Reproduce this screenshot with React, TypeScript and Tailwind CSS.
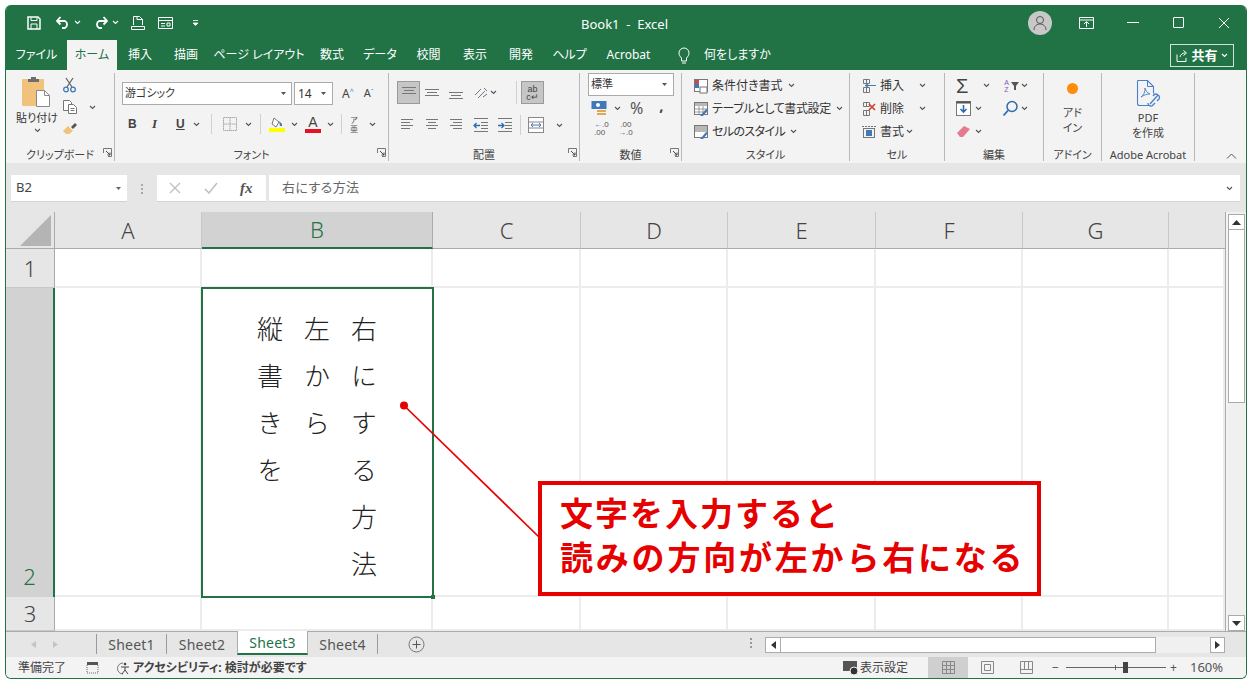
import type { ReactNode } from "react";

// widths are measured from the reference
const TABS = [
  { label: "ファイル", w: "w-[61px]" },
  { label: "ホーム", w: "w-[50px]", active: true },
  { label: "挿入", w: "w-[46px]" },
  { label: "描画", w: "w-[46px]" },
  { label: "ページ レイアウト", w: "w-[100px]" },
  { label: "数式", w: "w-[46px]" },
  { label: "データ", w: "w-[50px]" },
  { label: "校閲", w: "w-[47px]" },
  { label: "表示", w: "w-[46px]" },
  { label: "開発", w: "w-[46px]" },
  { label: "ヘルプ", w: "w-[51px]" },
  { label: "Acrobat", w: "w-[67px]" },
];

function Svg({ size = 16, w, h, children, className = "" }: { size?: number; w?: number; h?: number; children: ReactNode; className?: string }) {
  const vw = w ?? size;
  const vh = h ?? size;
  return (
    <svg width={vw} height={vh} viewBox={`0 0 ${vw} ${vh}`} fill="none" className={`shrink-0 ${className}`}>
      {children}
    </svg>
  );
}

function Chev({ className = "", color = "#555" }: { className?: string; color?: string }) {
  return (
    <Svg w={7} h={5} className={className}>
      <path d="M1 1l2.500 2.500L6 1" stroke={color} strokeWidth="1.100" />
    </Svg>
  );
}

function Launcher() {
  return (
    <Svg size={9} className="absolute right-[2px] bottom-[4px]">
      <path d="M.5 5V.5H8.500V8.500H5" stroke="#777" />
      <path d="M3 3l4 4M7 4.500V7H4.500" stroke="#444" />
    </Svg>
  );
}

function Group({ w, label, children, launcher }: { w: string; label: string; children: ReactNode; launcher?: boolean }) {
  return (
    <div className={`relative ${w} flex flex-col my-[3px] border-r border-[#b9b9b9] shrink-0`}>
      <div className="h-[73px] flex flex-col">{children}</div>
      <div className="h-[14px] mt-[1px] flex items-center justify-center text-[11px] leading-none text-[#444] whitespace-nowrap">{label}</div>
      {launcher && <Launcher />}
    </div>
  );
}

function Lines({ type }: { type: "left" | "center" | "right" | "top" | "mid" | "bottom" }) {
  const rows: Record<string, [number, number][]> = {
    left: [[2, 12], [5, 9], [8, 12], [11, 9]],
    center: [[2, 12], [5, 8], [8, 12], [11, 8]],
    right: [[2, 12], [5, 9], [8, 12], [11, 9]],
    top: [[2, 14], [5, 10], [8, 14]],
    mid: [[4, 14], [7, 10], [10, 14]],
    bottom: [[7, 14], [10, 10], [13, 14]],
  };
  return (
    <Svg size={16}>
      {rows[type].map(([y, len]) => {
        const x = type === "left" ? 2 : type === "right" ? 14 - len : 8 - len / 2;
        return <path key={y} d={`M${x} ${y + 0.5}h${len}`} stroke="#777" />;
      })}
    </Svg>
  );
}

function Clipboard() {
  return (
    <Svg w={30} h={32}>
      <rect x="0" y="3" width="22" height="27" rx="1" fill="#f0c27b" />
      <path d="M6 3h3V1h5v2h3v3H6z" fill="#6d6d6d" />
      <path d="M14.500 14.500h8l5 5v11h-13z" fill="#fff" stroke="#8a8a8a" />
      <path d="M22.500 14.500v5h5" stroke="#8a8a8a" />
    </Svg>
  );
}

function Scissors() {
  return (
    <Svg size={16}>
      <path d="M4 1l6 9M11 1L5 10" stroke="#666" strokeWidth="1.300" />
      <circle cx="4" cy="12.500" r="2.300" stroke="#3f79b8" strokeWidth="1.300" />
      <circle cx="11" cy="12.500" r="2.300" stroke="#3f79b8" strokeWidth="1.300" />
    </Svg>
  );
}

function CopyIcon() {
  return (
    <Svg size={16}>
      <path d="M1.500 1.500h6l2 2v8h-8z" fill="#fff" stroke="#777" />
      <path d="M6.500 5.500h5l3 3v6h-8z" fill="#fff" stroke="#777" />
      <path d="M8.500 9.500h4M8.500 11.500h4" stroke="#777" />
    </Svg>
  );
}

function Brush() {
  return (
    <Svg size={16}>
      <path d="M1 10l5-5 5 5-4 3H4z" fill="#f0c27b" />
      <path d="M9 6l4-4 2 2-4 4z" fill="#555" />
    </Svg>
  );
}

function SheetIcon({ accent }: { accent: "rule" | "table" | "style" }) {
  return (
    <Svg size={16}>
      <rect x="1.500" y="1.500" width="13" height="12" fill="#fff" stroke="#777" />
      {accent === "rule" && (
        <>
          <rect x="2" y="2" width="4" height="4" fill="#c0504d" />
          <rect x="2" y="6" width="4" height="4" fill="#3f79b8" />
          <rect x="7" y="9" width="7" height="6" fill="#fff" stroke="#777" />
        </>
      )}
      {accent !== "rule" && <rect x="2" y="2" width="12" height={accent === "table" ? 3 : 6} fill="#b7b7b7" />}
      {accent === "table" && <path d="M2 8h12M2 11h12M6 5v8M10 5v8" stroke="#9a9a9a" />}
      <path d="M8 14l5-6 2 1-5 6H7z" fill={accent === "rule" ? "none" : "#3f79b8"} />
    </Svg>
  );
}

function CellIcon({ kind }: { kind: "insert" | "delete" | "format" }) {
  return (
    <Svg size={16}>
      {kind === "format" ? (
        <>
          <path d="M1 2.500h14" stroke="#777" strokeDasharray="2 1" />
          <rect x="2.500" y="4.500" width="11" height="9" stroke="#777" />
          <rect x="5" y="6" width="6" height="6" fill="#3f79b8" />
        </>
      ) : (
        <>
          <path d="M2.500 1.500h6v4h-6zM2.500 9.500h6v5h-6zM5.500 9.500v5M5.500 1.500v4" stroke="#777" />
          {kind === "insert" ? (
            <path d="M4 7.500h11M7 5.500l-2 2 2 2" stroke="#3f79b8" strokeWidth="1.200" />
          ) : (
            <path d="M8 3l6 6M14 3l-6 6" stroke="#d83b2a" strokeWidth="1.600" />
          )}
        </>
      )}
    </Svg>
  );
}

function Pdf() {
  return (
    <Svg w={26} h={30}>
      <path d="M2.500 1.500h10l6 6v7M15 26.500H4.500a2 2 0 0 1-2-2v-23" stroke="#4a7fc9" strokeWidth="1.100" />
      <path d="M12.500 1.500v6h6" stroke="#4a7fc9" />
      <path d="M6 18c3-2 4-5 4-9 1 3 2 5 5 6-3 0-6 1-9 3z" stroke="#4a7fc9" strokeWidth=".9" />
      <path d="M15 25l8-9M13 24a3 3 0 0 0 4 3l3-3M18 17a3 3 0 0 1 6 3l-2 2" stroke="#4a7fc9" strokeWidth="1.300" />
    </Svg>
  );
}

function SideScroll() {
  return (
    <div className="w-[17px] ml-[2px] pt-[2px] flex flex-col bg-[#f0f0f0] shrink-0">
      <div className="h-[16px] bg-white border border-[#ababab] flex items-center justify-center">
        <Svg w={9} h={5}>
          <path d="M0 5l4.500-5L9 5z" fill="#333" />
        </Svg>
      </div>
      <div className="h-[173px] bg-white border-x border-b border-[#ababab]" />
      <div className="flex-1" />
      <div className="h-[16px] bg-white border border-[#ababab] flex items-center justify-center">
        <Svg w={9} h={5}>
          <path d="M0 0l4.500 5L9 0z" fill="#333" />
        </Svg>
      </div>
    </div>
  );
}

function Ribbon() {
  return (
    <div className="h-[93px] bg-[#f3f3f3] flex items-start">
      <Group w="w-[109px]" label="クリップボード" launcher>
        <div className="flex">
          <div className="w-[56px] flex flex-col items-center pl-[6px] pt-[3px]">
            <Clipboard />
            <div className="text-[11px] leading-[14px] mt-[3px] text-[#333] whitespace-nowrap">貼り付け</div>
            <Chev className="mt-[3px]" />
          </div>
          <div className="flex flex-col gap-[6px] pt-[4px]">
            <Scissors />
            <div className="flex items-center gap-[11px]">
              <CopyIcon />
              <Chev />
            </div>
            <Brush />
          </div>
        </div>
      </Group>

      <Group w="w-[274px]" label="フォント" launcher>
        <div className="flex items-center pl-[7px] pt-[9px]">
          <div className="w-[170px] h-[23px] bg-white border border-[#ababab] flex items-center justify-between px-[2px] text-[11px] text-[#333]">
            <span>游ゴシック</span>
            <Svg w={5} h={3} className="mr-[3px]">
              <path d="M0 0h5L2.500 3z" fill="#555" />
            </Svg>
          </div>
          <div className="w-[39px] h-[23px] ml-[2px] bg-white border border-[#ababab] flex items-center justify-between px-[3px] text-[12px] text-[#333]">
            <span>14</span>
            <Svg w={5} h={3} className="mr-[3px]">
              <path d="M0 0h5L2.500 3z" fill="#555" />
            </Svg>
          </div>
          <span className="ml-[9px] text-[12px] text-[#444]">A<sup className="text-[7px] text-[#3f79b8]">^</sup></span>
          <span className="ml-[10px] text-[11px] text-[#444]">A<sup className="text-[7px] text-[#3f79b8]">ˇ</sup></span>
        </div>
        <div className="flex items-center pl-[13px] mt-[8px] h-[22px] text-[#444]">
          <span className="w-[24px] text-[12px] font-bold [font-family:'Liberation_Sans']">B</span>
          <span className="w-[24px] text-[13px] italic font-bold [font-family:'Liberation_Serif']">I</span>
          <span className="w-[15px] text-[12px] font-bold underline [font-family:'Liberation_Sans']">U</span>
          <Chev className="ml-[2px]" />
          <div className="w-px h-[20px] bg-[#d0d0d0] mx-[11px]" />
          <Svg size={14}>
            <path d="M.5.5h13v13H.5zM7 .5v13M.5 7h13" stroke="#a8a8a8" strokeDasharray="1.500 .5" />
          </Svg>
          <Chev className="ml-[8px]" />
          <div className="w-px h-[20px] bg-[#d0d0d0] mx-[8px]" />
          <Svg size={16}>
            <path d="M5 2l5 4-3 5-4-3z" stroke="#777" fill="#fff" />
            <path d="M10 5l3 3v2h-2z" fill="#3f79b8" />
            <rect y="12" width="16" height="4" fill="#ffff00" />
          </Svg>
          <Chev className="ml-[6px]" />
          <div className="w-[16px] ml-[7px] flex flex-col items-center">
            <span className="text-[14px] leading-[13px] text-[#444] [font-family:'Liberation_Sans']">A</span>
            <div className="w-[16px] h-[4px] bg-[#e81123]" />
          </div>
          <Chev className="ml-[6px]" />
          <div className="w-px h-[20px] bg-[#d0d0d0] mx-[7px]" />
          <div className="w-[10px] flex flex-col items-center text-[8px] leading-[9px] text-[#555]">
            <span>ア</span>
            <span>亜</span>
          </div>
          <Chev className="ml-[10px]" />
        </div>
      </Group>

      <Group w="w-[191px]" label="配置" launcher>
        <div className="flex items-center pl-[8px] pt-[8px]">
          <div className="w-[23px] h-[23px] bg-[#c6c6c6] border border-[#9a9a9a] flex items-center justify-center">
            <Lines type="top" />
          </div>
          <div className="ml-[4px]"><Lines type="mid" /></div>
          <div className="ml-[8px]"><Lines type="bottom" /></div>
          <Svg size={16} className="ml-[9px]">
            <path d="M2 10l6-6M5 13l7-7M11 3l3 3" stroke="#777" />
            <path d="M10 12l4-3" stroke="#3f79b8" />
          </Svg>
          <Chev className="ml-[1px]" />
          <div className="w-px h-[23px] bg-[#d0d0d0] ml-[19px]" />
          <div className="w-[23px] h-[23px] ml-[4px] bg-[#c6c6c6] border border-[#9a9a9a] flex flex-col items-center justify-center text-[9px] leading-[8px] text-[#444] [font-family:'Liberation_Sans']">
            <span>ab</span>
            <span>c↵</span>
          </div>
        </div>
        <div className="flex items-center pl-[10px] mt-[10px] h-[22px]">
          <Lines type="left" />
          <div className="ml-[9px]"><Lines type="center" /></div>
          <div className="ml-[8px]"><Lines type="right" /></div>
          <Svg size={16} className="ml-[9px]">
            <path d="M1 1.500h14M8 5.500h7M8 8.500h7M8 11.500h7M1 14.500h14" stroke="#777" />
            <path d="M7 8.500H1M3.500 6l-2.500 2.500L3.500 11" stroke="#2b6cb0" strokeWidth="1.300" />
          </Svg>
          <Svg size={16} className="ml-[8px]">
            <path d="M1 1.500h14M8 5.500h7M8 8.500h7M8 11.500h7M1 14.500h14" stroke="#777" />
            <path d="M1 8.500h6M4.500 6L7 8.500 4.500 11" stroke="#2b6cb0" strokeWidth="1.300" />
          </Svg>
          <div className="w-px h-[20px] bg-[#d0d0d0] ml-[7px]" />
          <Svg size={16} className="ml-[7px]">
            <rect x=".5" y=".5" width="15" height="15" fill="#fff" stroke="#888" />
            <path d="M.5 5h15M.5 11h15" stroke="#888" />
            <path d="M3 8h10M5 6L3 8l2 2M11 6l2 2-2 2" stroke="#3f79b8" />
          </Svg>
          <Chev className="ml-[12px]" />
        </div>
      </Group>

      <Group w="w-[102px]" label="数値" launcher>
        <div className="ml-[8px] w-[86px] h-[23px] bg-white border border-[#ababab] flex items-center justify-between px-[2px] text-[11px] text-[#333]">
          <span>標準</span>
          <Svg w={5} h={3} className="mr-[4px]">
            <path d="M0 0h5L2.500 3z" fill="#555" />
          </Svg>
        </div>
        <div className="flex items-center pl-[11px] mt-[1px] h-[22px]">
          <Svg size={17}>
            <rect x=".5" y="1" width="15" height="8" fill="#3f79b8" />
            <circle cx="7" cy="5" r="2" fill="#fff" />
            <rect x="6" y="10" width="9" height="2" fill="#e0a850" />
            <rect x="6" y="13" width="9" height="2" fill="#e0a850" />
          </Svg>
          <Chev className="ml-[6px]" />
          <span className="ml-[9px] text-[16px] leading-none text-[#555]">%</span>
          <span className="ml-[16px] text-[15px] leading-none font-bold text-[#444] -mt-[6px]">,</span>
        </div>
        <div className="flex items-center pl-[14px] mt-[2px] text-[8px] leading-[8px] text-[#555]">
          <span className="w-[24px] [font-family:'Liberation_Sans']"><span className="text-[#2b6cb0]">←</span>.0<br />.00</span>
          <span className="[font-family:'Liberation_Sans']">&nbsp;.00<br /><span className="text-[#2b6cb0]">→</span>.0</span>
        </div>
      </Group>

      <Group w="w-[168px]" label="スタイル">
        <div className="flex flex-col pl-[11px] pt-[1px] text-[12px] text-[#333] whitespace-nowrap">
          <div className="h-[23px] flex items-center gap-[3px]"><SheetIcon accent="rule" />条件付き書式<Chev className="ml-[2px]" /></div>
          <div className="h-[23px] flex items-center gap-[3px] tracking-[-0.4px]"><SheetIcon accent="table" />テーブルとして書式設定<Chev className="ml-[2px]" /></div>
          <div className="h-[23px] flex items-center gap-[3px] tracking-[-0.6px]"><SheetIcon accent="style" />セルのスタイル<Chev className="ml-[2px]" /></div>
        </div>
      </Group>

      <Group w="w-[95px]" label="セル">
        <div className="flex flex-col pl-[11px] pt-[1px] text-[12px] text-[#333] whitespace-nowrap">
          <div className="h-[23px] flex items-center"><CellIcon kind="insert" /><span className="ml-[3px] w-[36px]">挿入</span><Chev className="ml-[3px]" /></div>
          <div className="h-[23px] flex items-center"><CellIcon kind="delete" /><span className="ml-[3px] w-[36px]">削除</span><Chev className="ml-[3px]" /></div>
          <div className="h-[23px] flex items-center"><CellIcon kind="format" /><span className="ml-[3px] w-[26px]">書式</span><Chev /></div>
        </div>
      </Group>

      <Group w="w-[99px]" label="編集">
        <div className="flex flex-col pl-[11px] pt-[1px]">
          <div className="h-[23px] flex items-center">
            <span className="w-[20px] text-[20px] leading-none text-[#444] [font-family:'Liberation_Sans']">Σ</span>
            <Chev className="ml-[7px]" />
            <div className="ml-[13px] w-[7px] flex flex-col items-center text-[7px] leading-[7px] text-[#7c5bb8] [font-family:'Liberation_Sans']">
              <span>A</span>
              <span>Z</span>
            </div>
            <Svg w={9} h={8} className="ml-[1px]">
              <path d="M0 0h8L5 4v4H3V4z" fill="#555" />
            </Svg>
            <Chev className="ml-[1px]" />
          </div>
          <div className="h-[23px] flex items-center">
            <Svg size={15}>
              <rect x=".5" y=".5" width="14" height="14" fill="#fff" stroke="#777" />
              <path d="M.5 1.500h14" stroke="#555" strokeWidth="2" />
              <path d="M7.500 4v7M4.500 8l3 3 3-3" stroke="#2b6cb0" strokeWidth="1.600" />
            </Svg>
            <Chev className="ml-[4px]" />
            <Svg size={17} className="ml-[20px]">
              <circle cx="10" cy="6.500" r="5" stroke="#2b6cb0" strokeWidth="1.500" />
              <path d="M6 10.500l-4.500 5" stroke="#2b6cb0" strokeWidth="1.800" />
            </Svg>
            <Chev className="ml-[2px]" />
          </div>
          <div className="h-[23px] flex items-center">
            <Svg size={15}>
              <path d="M1 9l7-7 6 3-7 8H4z" fill="#e57a8e" />
            </Svg>
            <Chev className="ml-[4px]" />
          </div>
        </div>
      </Group>

      <Group w="w-[58px]" label="アドイン">
        <div className="flex flex-col items-center pt-[10px]">
          <div className="w-[11px] h-[11px] rounded-full bg-[#ff8c0a]" />
          <div className="mt-[11px] text-[11px] leading-[15px] text-center text-[#444]">アド<br />イン</div>
        </div>
      </Group>

      <Group w="w-[93px]" label="Adobe Acrobat">
        <div className="flex flex-col items-center pt-[6px]">
          <Pdf />
          <div className="mt-[1px] text-[11px] leading-[15px] text-center text-[#444]">PDF<br />を作成</div>
        </div>
      </Group>

      <div className="flex-1 h-full flex items-end justify-end pr-[9px] pb-[4px]">
        <Svg w={11} h={6}>
          <path d="M1 5.500l4.500-4.500L10 5.500" stroke="#555" />
        </Svg>
      </div>
    </div>
  );
}

function FormulaBar() {
  return (
    <div className="h-[49px] bg-[#e6e6e6] pt-[12px] pl-[5px] pr-[6px] flex items-start">
      <div className="w-[116px] h-[27px] bg-white flex items-center justify-between pl-[5px] pr-[6px] text-[13px] text-[#444] border-b border-[#d4d4d4]">
        <span>B2</span>
        <Svg w={5} h={3}>
          <path d="M0 0h5L2.500 3z" fill="#666" />
        </Svg>
      </div>
      <div className="w-[30px] h-[27px] flex flex-col items-center justify-center gap-[2px]">
        <span className="w-[2px] h-[2px] bg-[#aaa]" />
        <span className="w-[2px] h-[2px] bg-[#aaa]" />
        <span className="w-[2px] h-[2px] bg-[#aaa]" />
      </div>
      <div className="w-[109px] h-[27px] bg-white flex items-center pl-[12px] border-b border-[#d4d4d4]">
        <Svg size={12}>
          <path d="M1 1l10 10M11 1L1 11" stroke="#bdbdbd" strokeWidth="1.200" />
        </Svg>
        <Svg size={14} className="ml-[23px]">
          <path d="M1 8l4 4 8-10" stroke="#bdbdbd" strokeWidth="1.500" />
        </Svg>
        <span className="ml-[22px] text-[15px] italic font-bold text-[#555] [font-family:'Liberation_Serif']">fx</span>
      </div>
      <div className="flex-1 ml-[3px] h-[27px] bg-white flex items-center justify-between pl-[13px] pr-[7px] text-[13px] text-[#666] border-b border-[#d4d4d4] tracking-[0.4px]">
        <span>右にする方法</span>
        <Chev />
      </div>
    </div>
  );
}

function ColHead({ label, active }: { label: string; active?: boolean }) {
  return (
    <div
      className={`flex items-center justify-center text-[22px] font-light border-r ${
        active
          ? "bg-[#d2d2d2] text-[#217346] border-b-2 border-b-[#217346] border-r-[#ababab]"
          : "bg-[#e6e6e6] text-[#444] border-b border-b-[#ababab] border-r-[#c8c8c8]"
      }`}
    >
      {label}
    </div>
  );
}

function RowHead({ label }: { label: string }) {
  return (
    <div className="flex justify-center items-center text-[22px] font-light bg-[#e6e6e6] text-[#444] border-r border-r-[#ababab] border-b border-b-[#c8c8c8]">
      {label}
    </div>
  );
}

function Cell() {
  return <div className="border-r-2 border-b-2 border-[#ececec] bg-white" />;
}

function Sheet() {
  const cols = 8;
  return (
    <div className="flex-1 flex min-h-0">
      <div className="w-[1219px] grid grid-cols-[49px_147px_231px_148px_147px_148px_147px_146px_56px] grid-rows-[37px_39px_309px_34px] overflow-hidden">
        <div className="bg-[#e6e6e6] border-r border-b border-[#ababab] flex items-end justify-end pr-[3px] pb-[2px]">
          <Svg w={31} h={31}>
            <path d="M31 0v31H0z" fill="#b4b4b4" />
          </Svg>
        </div>
        {["A", "B", "C", "D", "E", "F", "G"].map((c) => (
          <ColHead key={c} label={c} active={c === "B"} />
        ))}
        <div className="bg-[#e6e6e6] border-b border-b-[#ababab]" />

        <RowHead label="1" />
        {Array.from({ length: cols }).map((_, i) => (
          <Cell key={i} />
        ))}

        <div className="bg-[#d2d2d2] text-[#217346] border-r-2 border-[#217346] flex items-end justify-center text-[22px] font-light pb-[4px]">2</div>
        <Cell />
        <div className="relative border-2 border-[#217346] bg-white flex items-start justify-center pt-[27px] -m-px z-10">
          <div className="[writing-mode:vertical-rl] [font-feature-settings:normal] text-[26px] font-light leading-[47px] tracking-[21px] text-[#222] whitespace-pre h-[282px] mr-[5px]">
            {"右にする方法\n左から\n縦書きを"}
          </div>
          <span className="absolute -right-[3px] -bottom-[3px] w-[4px] h-[4px] bg-[#217346]" />
        </div>
        {Array.from({ length: cols - 2 }).map((_, i) => (
          <Cell key={i} />
        ))}

        <RowHead label="3" />
        {Array.from({ length: cols }).map((_, i) => (
          <Cell key={i} />
        ))}
      </div>
      <div className="w-px bg-[#ababab] shrink-0" />
      <SideScroll />
    </div>
  );
}

function SheetTabs() {
  return (
    <div className="h-[26px] bg-[#e6e6e6] border-t border-[#ababab] flex items-start text-[14px] text-[#555] tracking-[0.2px]">
      <div className="w-[90px] h-[24px] flex items-center pl-[25px] gap-[17px]">
        <Svg w={5} h={7}>
          <path d="M5 0v7L0 3.500z" fill="#c4c4c4" />
        </Svg>
        <Svg w={5} h={7}>
          <path d="M0 0v7l5-3.500z" fill="#c4c4c4" />
        </Svg>
      </div>
      <div className="w-[71px] h-[20px] mt-[2px] border-x border-[#9a9a9a] flex items-center justify-center">Sheet1</div>
      <div className="w-[70px] h-[20px] mt-[2px] flex items-center justify-center">Sheet2</div>
      <div className="w-[71px] h-[24px] -mt-px bg-white border-x border-[#ababab] border-b-2 border-b-[#217346] text-[#217346] flex items-center justify-center">Sheet3</div>
      <div className="w-[70px] h-[20px] mt-[2px] border-r border-[#9a9a9a] flex items-center justify-center">Sheet4</div>
      <div className="ml-[30px] mt-[4px]">
        <Svg size={17}>
          <circle cx="8.500" cy="8.500" r="7.500" stroke="#777" />
          <path d="M8.500 4.500v8M4.500 8.500h8" stroke="#555" />
        </Svg>
      </div>
      <div className="ml-[325px] mt-[6px] flex flex-col gap-[2px]">
        <span className="w-[2px] h-[2px] bg-[#999]" />
        <span className="w-[2px] h-[2px] bg-[#999]" />
        <span className="w-[2px] h-[2px] bg-[#999]" />
      </div>
      <div className="ml-[13px] mt-[5px] w-[460px] h-[16px] flex">
        <div className="w-[16px] bg-white border border-[#ababab] flex items-center justify-center">
          <Svg w={5} h={8}>
            <path d="M5 0v8L0 4z" fill="#333" />
          </Svg>
        </div>
        <div className="w-[375px] bg-white border-y border-r border-[#ababab]" />
        <div className="flex-1 bg-[#f0f0f0]" />
        <div className="w-[15px] bg-white border border-[#ababab] flex items-center justify-center">
          <Svg w={5} h={8}>
            <path d="M0 0v8l5-4z" fill="#333" />
          </Svg>
        </div>
      </div>
    </div>
  );
}

function StatusBar() {
  return (
    <div className="h-[21px] bg-[#f3f3f3] flex items-center text-[12px] text-[#444]">
      <span className="ml-[12px] w-[68px]">準備完了</span>
      <Svg size={13}>
        <rect x="1" y="3" width="11" height="9" fill="none" stroke="#666" strokeDasharray="1 1" />
        <rect x="1" y="1" width="11" height="3" fill="#555" />
      </Svg>
      <Svg size={16} className="ml-[17px]">
        <path d="M7 3a5.500 5.500 0 0 0 0 11" stroke="#777" />
        <circle cx="9" cy="4" r="1.300" fill="#444" />
        <path d="M5 7h8M9 7v3l-3 4M9 10l3 4" stroke="#444" />
      </Svg>
      <span className="ml-[1px] font-bold text-[12px]">アクセシビリティ: 検討が必要です</span>
      <div className="ml-auto flex items-center h-full mr-[22px]">
        <Svg size={16}>
          <rect y="1" width="14" height="10" fill="#555" />
          <circle cx="11" cy="11" r="4" fill="#333" stroke="#f3f3f3" />
        </Svg>
        <span className="w-[48px] text-[12px] mr-[20px] ml-[1px] whitespace-nowrap">表示設定</span>
        <div className="w-[40px] h-full bg-[#cfcfcf] flex items-center justify-center">
          <Svg size={13}>
            <path d="M.5.5h12v12H.5zM4.500.5v12M8.500.5v12M.5 4.500h12M.5 8.500h12" stroke="#888" />
          </Svg>
        </div>
        <div className="w-[39px] flex items-center justify-center">
          <Svg size={13}>
            <path d="M.5.5h12v12H.5zM3.500 3.500h6v6h-6z" stroke="#888" />
          </Svg>
        </div>
        <div className="w-[39px] flex items-center justify-center">
          <Svg size={13}>
            <path d="M.5.5h12v12H.5zM.5 8.500h12M4.500.5v8M8.500.5v8" stroke="#888" />
          </Svg>
        </div>
        <span className="w-[12px] ml-[6px] text-[#555]">−</span>
        <div className="relative w-[100px] h-px ml-[2px] bg-[#666]">
          <span className="absolute left-[49px] -top-[2px] w-px h-[5px] bg-[#666]" />
          <span className="absolute left-[57px] -top-[5px] w-[5px] h-[11px] bg-[#444]" />
        </div>
        <span className="ml-[4px] w-[20px] text-[#555]">+</span>
        <span className="w-[34px] text-[13px] text-[#555] [font-family:'Noto_Sans']">160%</span>
      </div>
    </div>
  );
}

export default function App() {
  return (
    <div className="relative w-[1255px] h-[686px] bg-white overflow-hidden [font-feature-settings:'palt'] font-['Noto_Sans','Noto_Sans_CJK_JP',sans-serif]">
      <div className="absolute isolate left-[5px] top-[5px] w-[1242px] h-[674px] rounded-[6px] overflow-hidden border-x border-b border-[#217346] flex flex-col bg-[#f3f3f3]">
        {/* Title bar */}
        <div className="h-[35px] bg-[#217346] relative flex items-center text-white shrink-0">
          <div className="flex items-center pl-[21px]">
            <Svg size={14}>
              <path d="M1 1h10l2 2v10H1z" stroke="#fff" strokeWidth="1.500" />
              <path d="M4 1.500v3h6v-3M4 13V8h6v5" stroke="#fff" />
            </Svg>
            <Svg w={14} h={13} className="ml-[15px]">
              <path d="M1 5h8a4 4 0 0 1 0 7H6M4.500 1L1 5l3.500 3.500" stroke="#fff" strokeWidth="1.800" />
            </Svg>
            <Chev color="#fff" className="ml-[4px]" />
            <Svg w={14} h={13} className="ml-[13px]">
              <path d="M13 5H5a4 4 0 0 0 0 7h3M9.500 1L13 5 9.500 8.500" stroke="#fff" strokeWidth="1.800" />
            </Svg>
            <Chev color="#fff" className="ml-[4px]" />
            <Svg size={14} className="ml-[12px]">
              <path d="M2.500 9V.5h6l3 3V9M6 .5v3h5.500M.5 10.500h13v3H.5z" stroke="#fff" />
            </Svg>
            <Svg w={15} h={12} className="ml-[13px]">
              <path d="M.5.5h14v11H.5zM.5 3.500h14M3 6.500h4M9 6h3v3H9zM3 9h4" stroke="#fff" />
            </Svg>
            <Svg w={5} h={6} className="ml-[20px]">
              <path d="M0 .5h5M0 3h5L2.500 5.500z" stroke="#fff" strokeWidth=".8" fill="#fff" />
            </Svg>
          </div>
          <div className="absolute left-[575px] top-[10px] text-[13px] leading-[18px]">Book1&nbsp; -&nbsp; Excel</div>
          <div className="ml-auto flex items-center">
            <div className="w-[24px] h-[24px] rounded-full bg-[#c8c8c8] flex items-center justify-center">
              <Svg size={16}>
                <circle cx="8" cy="5" r="3.500" stroke="#555" />
                <path d="M2 15c0-4 3-6 6-6s6 2 6 6" stroke="#555" />
              </Svg>
            </div>
            <Svg w={15} h={12} className="ml-[27px]">
              <path d="M.5.500h14v11H.5zM.5 3h14M7.500 10V5M5 7l2.500-2.500L10 7" stroke="#fff" />
            </Svg>
            <span className="w-[12px] h-px bg-white ml-[33px]" />
            <span className="w-[11px] h-[11px] border border-white ml-[34px] rounded-[1px]" />
            <Svg size={12} className="ml-[34px] mr-[16px]">
              <path d="M1 1l10 10M11 1L1 11" stroke="#fff" />
            </Svg>
          </div>
        </div>

        {/* Tabs */}
        <div className="h-[30px] bg-[#217346] flex items-end text-[12px] text-white shrink-0 relative">
          {TABS.map((t) => (
            <div
              key={t.label}
              className={`${t.w} h-[30px] flex items-center justify-center whitespace-nowrap ${
                t.active ? "bg-[#f3f3f3] text-[#217346]" : ""
              }`}
            >
              {t.label}
            </div>
          ))}
          <div className="h-[30px] flex items-center ml-[16px]">
            <Svg w={12} h={17}>
              <path d="M3.500 11C2 9.500 1 8 1 6a5 5 0 0 1 10 0c0 2-1 3.500-2.500 5v3h-5zM4 16h4" stroke="#fff" />
            </Svg>
            <span className="ml-[14px]">何をしますか</span>
          </div>
          <div className="ml-auto mb-[3px] mr-[12px] w-[64px] h-[23px] border border-[#cfe3d8] flex items-center justify-center gap-[3px] text-[13px]">
            <Svg size={12}>
              <path d="M1 4.500v7h9V8M4 7c.5-2.500 2.500-4 5-4M7.500 .5L10.500 3 7.500 5.500" stroke="#fff" />
            </Svg>
            <span className="font-bold">共有</span>
            <Chev color="#fff" />
          </div>
        </div>

        <Ribbon />
        <FormulaBar />
        <Sheet />
        <SheetTabs />
        <StatusBar />
      </div>

      {/* Callout */}
      <svg width="1255" height="686" className="absolute left-0 top-0 pointer-events-none">
        <circle cx="404" cy="405.500" r="4" fill="#e60000" />
        <path d="M404 405.500L539 537" stroke="#e60000" strokeWidth="1.700" />
      </svg>
      <div className="absolute left-[538px] top-[481px] w-[503px] h-[115px] border-[4px] border-[#e60000] bg-white pl-[18px] pt-[7px] text-[#e60000] font-bold text-[33px] leading-[44px] whitespace-nowrap tracking-[2px] [font-feature-settings:normal]">
        <div>文字を入力すると</div>
        <div className="tracking-[2.800px]">読みの方向が左から右になる</div>
      </div>
    </div>
  );
}
